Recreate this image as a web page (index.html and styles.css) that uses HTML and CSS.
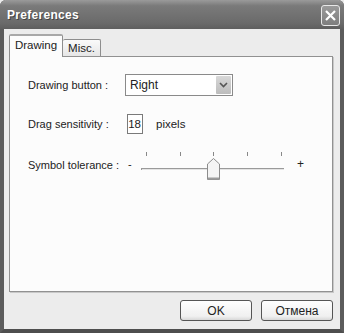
FILE: index.html
```html
<!DOCTYPE html>
<html lang="en">
<head>
    <meta charset="UTF-8">
    <title>Preferences</title>
    <link rel="stylesheet" href="styles.css">
</head>
<body>
    <div class="window">
        <div class="titlebar">
            <span class="title">Preferences</span>
            <span class="close">
                <svg width="11" height="11" viewBox="0 0 11 11">
                    <path d="M1 1 L10 10 M10 1 L1 10" stroke="#fff" stroke-width="2.2" fill="none"/>
                </svg>
            </span>
        </div>

        <div class="client">
            <div class="tabs">
                <div class="tab active">Drawing</div>
                <div class="tab">Misc.</div>
            </div>

            <div class="panel">
                <div class="row row-first">
                    <label class="label">Drawing button :</label>
                    <div class="select">
                        <span class="select-value">Right</span>
                        <span class="select-arrow">
                            <svg width="9" height="6" viewBox="0 0 9 6">
                                <path d="M1 1 L4.5 4.5 L8 1" stroke="#555" stroke-width="1.6" fill="none"/>
                            </svg>
                        </span>
                    </div>
                </div>

                <div class="row row-second">
                    <label class="label">Drag sensitivity :</label>
                    <div class="spin">18</div>
                    <span class="unit">pixels</span>
                </div>

                <div class="row row-third">
                    <label class="label">Symbol tolerance :</label>
                    <span class="minus">-</span>
                    <svg class="slider" width="145" height="32" viewBox="0 0 145 32">
                        <!-- ticks -->
                        <g stroke="#888" stroke-width="1">
                            <line x1="6.5" y1="3" x2="6.5" y2="7"/>
                            <line x1="40.5" y1="3" x2="40.5" y2="7"/>
                            <line x1="73.5" y1="3" x2="73.5" y2="7"/>
                            <line x1="107.5" y1="3" x2="107.5" y2="7"/>
                            <line x1="141.5" y1="3" x2="141.5" y2="7"/>
                        </g>
                        <!-- groove -->
                        <line x1="1" y1="19.5" x2="144" y2="19.5" stroke="#9a9a9a"/>
                        <line x1="1" y1="20.5" x2="144" y2="20.5" stroke="#e4e4e4"/>
                        <line x1="1.5" y1="19" x2="1.5" y2="21" stroke="#9a9a9a"/>
                        <!-- thumb -->
                        <path d="M67.5 30.5 L67.5 15 L73.5 9.5 L79.5 15 L79.5 30.5 Z" fill="#f4f4f4" stroke="#8c8c8c"/>
                        <line x1="68" y1="29.5" x2="79" y2="29.5" stroke="#9c9c9c" stroke-width="2"/>
                    </svg>
                    <span class="plus">+</span>
                </div>
            </div>

            <div class="buttons">
                <button class="btn">OK</button>
                <button class="btn">Отмена</button>
            </div>
        </div>
    </div>
</body>
</html>
```

FILE: styles.css
```css
body {
    margin: 0;
    padding: 0;
    background: #ececec;
    font-family: "Liberation Sans", Arial, sans-serif;
    font-size: 11px;
    color: #222;
}

.window {
    width: 344px;
    height: 333px;
    box-sizing: border-box;
    display: flex;
    flex-direction: column;
    background: #ececec;
    border-left: 4px solid #5c5c5c;
    border-right: 4px solid #5c5c5c;
    border-bottom: 4px solid #4e4e4e;
    border-radius: 6px 6px 0 0;
}

.titlebar {
    height: 29px;
    margin: 0 -4px;
    padding: 0 4px 0 7px;
    display: flex;
    align-items: center;
    justify-content: space-between;
    background: linear-gradient(#9a9a9a, #7a7a7a 20%, #6a6a6a 80%, #5e5e5e);
    border-radius: 6px 6px 0 0;
}

.title {
    color: #fff;
    font-size: 12px;
    font-weight: bold;
    text-shadow: 1px 1px 0 #444;
    letter-spacing: 0.3px;
    margin-top: 1px;
}

.close {
    width: 17px;
    height: 19px;
    margin-top: 2px;
    display: flex;
    align-items: center;
    justify-content: center;
    border: 1px solid #e8e8e8;
    border-radius: 3px;
    background: linear-gradient(#9a9a9a, #7e7e7e);
}

.client {
    flex: 1;
    display: flex;
    flex-direction: column;
    padding: 4px 3px 0 5px;
}

.tabs {
    display: flex;
    align-items: flex-end;
    height: 23px;
    position: relative;
    z-index: 1;
}

.tab {
    height: 17px;
    box-sizing: border-box;
    display: flex;
    align-items: center;
    justify-content: center;
    background: linear-gradient(#fafafa, #e6e6e6);
    border: 1px solid #8e8e8e;
    border-bottom: none;
    border-radius: 2px 2px 0 0;
    font-size: 11.5px;
}

.tab.active {
    height: 23px;
    width: 54px;
    padding-top: 3px;
    background: #fcfcfc;
    border-top: 2px solid #a8a8a8;
    margin-bottom: -1px;
    align-items: flex-start;
    font-size: 11.5px;
}

.tab + .tab {
    border-left: none;
    width: 38px;
}

.panel {
    height: 234px;
    background: #fcfcfc;
    border: 1px solid #919191;
    box-shadow: 1px 1px 0 #c8c8c8;
    margin-right: 4px;
    padding-left: 18px;
}

.row {
    display: flex;
    align-items: center;
}

.label {
    width: 97px;
    flex-shrink: 0;
    font-size: 11px;
}

.row-first {
    margin-top: 17px;
    height: 22px;
}

.select {
    width: 108px;
    height: 22px;
    box-sizing: border-box;
    border: 1px solid #8a8a8a;
    background: #fff;
    display: flex;
    align-items: center;
    justify-content: space-between;
    padding: 1px;
}

.select-value {
    padding-left: 3px;
    font-size: 12px;
}

.select-arrow {
    width: 15px;
    height: 18px;
    display: flex;
    align-items: center;
    justify-content: center;
    background: linear-gradient(#d8d8d8, #bcbcbc);
    border-radius: 1px;
}

.row-second {
    margin-top: 18px;
    height: 20px;
}

.spin {
    width: 16px;
    height: 20px;
    box-sizing: border-box;
    margin-left: 2px;
    border: 1px solid #7a7a7a;
    background: #fff;
    text-align: right;
    padding-right: 1px;
    line-height: 18px;
    font-size: 11.5px;
}

.unit {
    margin-left: 13px;
    font-size: 11.5px;
}

.row-third {
    margin-top: 15px;
    height: 32px;
}

.row-third .label {
    margin-top: -1px;
}

.minus {
    width: 15px;
    flex-shrink: 0;
    padding-left: 3px;
    box-sizing: border-box;
    margin-top: -2px;
    font-size: 11px;
}

.slider {
    display: block;
    flex-shrink: 0;
}

.plus {
    margin-left: 12px;
    margin-top: -3px;
    font-size: 12px;
}

.buttons {
    display: flex;
    justify-content: flex-end;
    gap: 9px;
    margin-top: 8px;
    margin-right: 4px;
}

.btn {
    width: 72px;
    height: 21px;
    padding: 0;
    border: 1px solid #555;
    border-radius: 3px;
    background: linear-gradient(#fefefe, #f0f0f0 80%, #d8d8d8);
    font-family: "Liberation Sans", Arial, sans-serif;
    font-size: 12px;
    color: #222;
}
```
